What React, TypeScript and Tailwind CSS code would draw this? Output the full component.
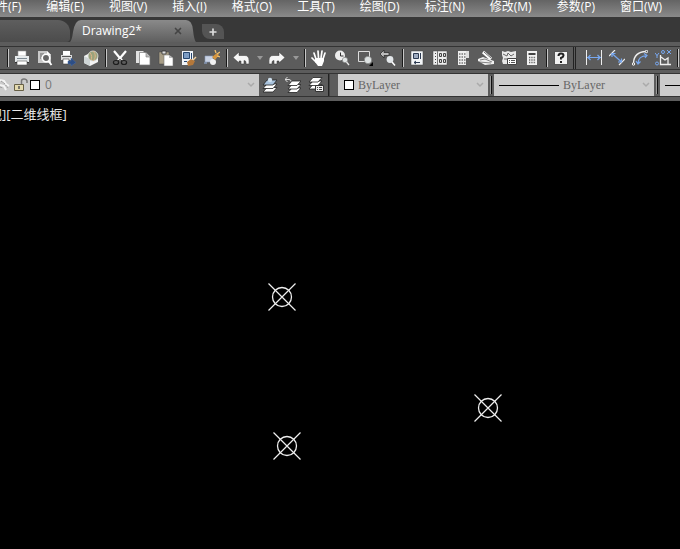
import React from 'react';
import { Plus, X } from 'lucide-react';

const MENUS = [
  '文件(F)', '编辑(E)', '视图(V)', '插入(I)', '格式(O)', '工具(T)',
  '绘图(D)', '标注(N)', '修改(M)', '参数(P)', '窗口(W)',
];

const POINTS = [
  { x: 268, y: 182 },
  { x: 474, y: 293 },
  { x: 273, y: 331 },
];

const icons: Record<string, React.ReactNode> = {
  print: (
    <>
      <path d="M4 1h8v5H4z" fill="#fff" stroke="#999" strokeWidth=".6" />
      <path d="M1 6h14v6H1z" fill="#e6eaec" />
      <path d="M3 8.500h10" stroke="#7e8a92" />
      <path d="M3 11h10v4H3z" fill="#fff" stroke="#555" strokeWidth=".6" />
      <path d="M1 12.500h2M13 12.500h2" stroke="#333" />
    </>
  ),
  preview: (
    <>
      <path d="M1 1h9l4 4v8H1z" fill="#c9c9c9" />
      <path d="M10 1v4h4z" fill="#fff" />
      <path d="M3 4h4M3 6h2M3 8h1" stroke="#666" />
      <circle cx="9" cy="8" r="3.700" fill="#666" stroke="#fff" strokeWidth="1.500" />
      <path d="M11.500 11l3 4" stroke="#fff" strokeWidth="1.800" />
    </>
  ),
  plot: (
    <>
      <path d="M3 1h7v4H3z" fill="#fff" />
      <path d="M1 5h11v5H1z" fill="#dcdcdc" />
      <path d="M2 6.500h9" stroke="#555" />
      <path d="M3 9h6v5H3z" fill="#fff" stroke="#444" strokeWidth=".6" />
      <path d="M8 11h3V8l5 4.500-5 3.500v-2H8z" fill="#2d4e85" stroke="#4a6da5" strokeWidth=".5" />
    </>
  ),
  globe: (
    <>
      <path d="M1 6l6-3 8 3v6l-8 4-6-3z" fill="#f4f4f4" />
      <path d="M1 6l6 3v7l-6-3z" fill="#cfd5d6" />
      <circle cx="10" cy="6" r="5" fill="#9aa37c" stroke="#ddd" strokeWidth=".8" />
      <path d="M10 1c3 3 3 7 0 10M7 3c2 2 2 5 1 7" stroke="#e0b48a" fill="none" />
    </>
  ),
  cut: (
    <>
      <path d="M2 1l8 9.500M14 1l-8 9.500" stroke="#fff" strokeWidth="2.200" />
      <ellipse cx="4" cy="12.500" rx="2.600" ry="2" fill="none" stroke="#1d1d1d" strokeWidth="1.200" />
      <ellipse cx="12" cy="12.500" rx="2.600" ry="2" fill="none" stroke="#1d1d1d" strokeWidth="1.200" />
      <path d="M6 11l2-1.500 2 1.500" stroke="#1d1d1d" fill="none" />
    </>
  ),
  copy: (
    <>
      <path d="M1 1h7l3 3v9H1z" fill="#e2e2e2" />
      <path d="M4.500 2.500H11l4 4V15H4.500z" fill="#fff" stroke="#777" strokeWidth=".7" />
      <path d="M11 3v4h4" fill="#bbb" stroke="#777" strokeWidth=".6" />
    </>
  ),
  paste: (
    <>
      <path d="M1 2h10v12H1z" fill="#a79d86" stroke="#444" strokeWidth=".5" />
      <path d="M4 1h4v3H4z" fill="#ddd" stroke="#333" strokeWidth=".8" />
      <path d="M6 5h5l4 3v8H6z" fill="#fff" stroke="#777" strokeWidth=".6" />
      <path d="M11 5v3h4" fill="#bbb" />
    </>
  ),
  match: (
    <>
      <path d="M1 1h11v14H1z" fill="#f0f4f8" />
      <path d="M2.500 2.500h6v6h-6z" fill="#7c9cc4" stroke="#26466f" />
      <path d="M10.500 3v6M3 11.500h3" stroke="#26466f" />
      <path d="M6 12l4-3 4 2-2 4-5 1z" fill="#b5783a" />
      <path d="M12 10l3-3" stroke="#f0cf9f" strokeWidth="1.500" />
    </>
  ),
  block: (
    <>
      <path d="M1 6h8v6H1z" fill="#c9d2e3" stroke="#8c9bb8" strokeWidth=".6" />
      <path d="M0 13h3" stroke="#9ab4e0" />
      <circle cx="9" cy="12" r="3" fill="#f2f2f2" />
      <path d="M8 7l5-4 2 2-4 5z" fill="#d4943e" />
      <path d="M11 0l1 3M16 2l-3 2M16 7l-3-1" stroke="#f5c16c" strokeWidth="1.300" />
    </>
  ),
  undo: <path d="M0 7.500L6 2v3.500h6q4 0 4 5V14h-3v-1.500q0-2-2-2V14H8v-3H6v2z" fill="#f6f6f6" stroke="#333" strokeWidth=".5" />,
  redo: <path d="M16 7.500L10 2v3.500H4q-4 0-4 5V14h3v-1.500q0-2 2-2V14h3v-3h2v2z" fill="#f6f6f6" stroke="#333" strokeWidth=".5" />,
  hand: (
    <>
      <path d="M5 9L3 3M7.500 8L7 1M10 8l1-7M12 9l2-6M5 12L1 8" stroke="#fff" strokeWidth="1.700" strokeLinecap="round" />
      <path d="M4 8h9v3l-2 5H7l-3-4z" fill="#fff" />
    </>
  ),
  zoom: (
    <>
      <circle cx="6" cy="5.500" r="5" fill="#ededed" />
      <path d="M6.500 2.500v3.500h3" stroke="#333" fill="none" />
      <circle cx="11" cy="10" r="2.700" fill="#e2e6e6" stroke="#666" strokeWidth=".5" />
      <path d="M12.500 12l2.500 3" stroke="#e8e8e8" strokeWidth="1.300" />
    </>
  ),
  zoomWindow: (
    <>
      <path d="M1.500 1.500h11v10h-11z" fill="none" stroke="#ddd" />
      <circle cx="11" cy="10" r="3.700" fill="#dde2e2" stroke="#666" strokeWidth=".5" />
      <path d="M16 12v4h-4z" fill="#000" />
    </>
  ),
  zoomPrev: (
    <>
      <path d="M0 4l4-4v2.500h5v3H4V8z" fill="#bbb" stroke="#222" strokeWidth=".7" />
      <circle cx="10" cy="9.500" r="3.400" fill="#e3e7ea" />
      <path d="M12 12l3 3.500" stroke="#fff" strokeWidth="1.500" />
    </>
  ),
  props: (
    <>
      <path d="M2 1h12v14H2z" fill="#f4f6f8" stroke="#444" strokeWidth=".5" />
      <path d="M4.500 3.500h5v5h-5z" fill="#9eabc0" stroke="#2d3b52" />
      <path d="M11.500 3v6" stroke="#2d3b52" />
      <path d="M5 12.500h6M7 11l-2 1.500L7 14" stroke="#2d3b52" fill="none" />
    </>
  ),
  center: (
    <>
      <path d="M1 1h14v14H1z" fill="#eee" stroke="#444" strokeWidth=".5" />
      <path d="M3.500 3v11" stroke="#444" strokeDasharray="1 2" />
      <path d="M5.500 1v14" stroke="#777" />
      <path d="M7.500 3.500h2v3h-2zM11.500 3.500h2v3h-2zM7.500 9.500h2v3h-2zM11.500 9.500h2v3h-2z" fill="#d9d9d9" stroke="#444" />
    </>
  ),
  palettes: (
    <>
      <path d="M3 1h8v14H3z" fill="#eee" />
      <path d="M11 1h3v7h-3z" fill="#ddd" />
      <path d="M4 4h7M4 7h7M4 10h7M4 13h7" stroke="#777" strokeWidth="1.500" strokeDasharray="1.500 1" />
    </>
  ),
  sheets: (
    <>
      <path d="M0 9l5-2 11 4v3l-9 1-7-4z" fill="#f0f0f0" />
      <path d="M2 10l5-1 7 3M1 12l12 1" stroke="#666" fill="none" strokeWidth=".8" />
      <path d="M5 2l8 7" stroke="#fff" strokeWidth="3" />
      <path d="M6 2l7 6" stroke="#444" strokeWidth=".8" />
    </>
  ),
  markup: (
    <>
      <path d="M1 1l3 1 3-1 3 1 5-1v7H7v6H2l-1-3 1-3-1-3z" fill="#e8e8e8" />
      <path d="M2 4l4 2 1-3 3 3 3-2M3 9h3" stroke="#666" fill="none" />
      <path d="M6.500 8.500h9v6h-9z" fill="#fff" stroke="#444" />
      <path d="M8 10.500h1M10 10.500h4M8 12.500h1M10 12.500h4" stroke="#555" />
    </>
  ),
  calc: (
    <>
      <path d="M3 1h10v14H3z" fill="#f2f2f2" />
      <path d="M4.500 4h7" stroke="#444" strokeWidth="2" />
      <path d="M5 7.500h7M5 10h7M5 12.500h7" stroke="#666" strokeDasharray="1.300 1" strokeWidth="1.300" />
    </>
  ),
  help: (
    <>
      <path d="M1.500 1.500h13v13h-13z" fill="#f2f2f2" stroke="#333" strokeWidth=".7" />
      <path d="M5.500 6q0-2.500 2.500-2.500t2.500 2q0 1.500-2.500 2.500v1.500M8 11v2" fill="none" stroke="#222" strokeWidth="2" />
    </>
  ),
  linear: (
    <>
      <path d="M.5 0v15M15.500 0v15" stroke="#eee" />
      <path d="M1 7.500h14M4.500 5L2 7.500 4.500 10M11.500 5L14 7.500 11.500 10" stroke="#78a8f0" fill="none" strokeWidth="1.200" />
    </>
  ),
  aligned: (
    <>
      <path d="M0 6l6-6M10 15l6-6" stroke="#eee" strokeWidth="1.200" />
      <path d="M3 3.500l9.500 8.500M3 7V3.500h3.500M9 12h3.500V8.500" stroke="#78a8f0" fill="none" strokeWidth="1.200" />
    </>
  ),
  arc: (
    <>
      <path d="M1.500 13Q2 2 14 1.500" fill="none" stroke="#eee" strokeWidth="1.400" />
      <path d="M6 13.500Q6 6 15 5.500M4 11l2 3 2.500-2.500M12 3.500l3 2-2 2.500" fill="none" stroke="#78a8f0" strokeWidth="1.200" />
      <circle cx="1.500" cy="14" r="1.200" fill="#555" stroke="#fff" />
      <circle cx="14.500" cy="1.500" r="1.200" fill="#555" stroke="#fff" />
    </>
  ),
  ordinate: (
    <>
      <path d="M5.500 5v9.500H16M6 7l4 3 3-2v7" fill="none" stroke="#eee" strokeWidth="1.300" />
      <path d="M0 3l2 2.500L4 3M2 5v3M12 0l4 4M16 0l-4 4" fill="none" stroke="#78a8f0" />
      <circle cx="8" cy="2" r="1.500" fill="none" stroke="#78a8f0" />
      <circle cx="2" cy="13.500" r="1.500" fill="none" stroke="#78a8f0" />
    </>
  ),
  layerState: (
    <>
      <path d="M5 10.500h10l-4 4.500H1z" fill="#fff" stroke="#222" strokeWidth=".8" />
      <path d="M5 7h10l-4 4.500H1z" fill="#fff" stroke="#222" strokeWidth=".8" />
      <path d="M5 3h10l-4 5H1z" fill="#a9c3dd" stroke="#222" strokeWidth=".8" />
      <circle cx="8" cy="3" r="2.200" fill="#cfe0ee" />
    </>
  ),
  layerPrev: (
    <>
      <path d="M7 11h9l-4 4.500H3z" fill="#fff" stroke="#222" strokeWidth=".8" />
      <path d="M7 7.500h9L12 12H3z" fill="#fff" stroke="#222" strokeWidth=".8" />
      <path d="M7 4h9l-4 4.500H3z" fill="#fff" stroke="#222" strokeWidth=".8" />
      <path d="M0 2.500h4q2 0 2 2M2.500 0L0 2.500 2.500 5" fill="none" stroke="#ddd" />
    </>
  ),
  layerMgr: (
    <>
      <path d="M5 7.500h9L10 12H1z" fill="#fff" stroke="#222" strokeWidth=".8" />
      <path d="M5 4h9l-4 4.500H1z" fill="#fff" stroke="#222" strokeWidth=".8" />
      <path d="M5 .5h9L10 5H1z" fill="#fff" stroke="#222" strokeWidth=".8" />
      <path d="M7.500 8.500h8v6h-8z" fill="#eee" stroke="#333" />
      <path d="M9 10.500h1M11 10.500h3M9 12.500h1M11 12.500h3" stroke="#444" />
    </>
  ),
};

const ToolButton = ({ name, label }: { name: string; label: string }) => (
  <button type="button" aria-label={label} className="flex h-5 w-[23px] shrink-0 items-center pl-[3px]">
    <svg viewBox="0 0 16 16" className="size-4" aria-hidden="true">{icons[name]}</svg>
  </button>
);

const Separator = () => (
  <div className="flex h-[18px] w-[6px] shrink-0 justify-center self-center">
    <div className="w-px bg-[#181818]" />
    <div className="w-px bg-[#c8c8c8]" />
  </div>
);

const Grip = () => (
  <div className="flex w-[6px] shrink-0 justify-center py-0.5">
    <div className="w-px bg-[#9a9a9a]" />
    <div className="w-px bg-[#101010]" />
  </div>
);

const HistoryArrow = ({ label }: { label: string }) => (
  <button type="button" aria-label={label} className="flex h-5 w-[13px] shrink-0 items-center justify-center">
    <svg viewBox="0 0 6 4" className="h-1 w-1.5" aria-hidden="true"><path d="M0 0h6L3 4z" fill="#999" /></svg>
  </button>
);

const Chevron = () => (
  <svg viewBox="0 0 8 6" className="pointer-events-none absolute top-2 right-1 h-1.5 w-2" aria-hidden="true">
    <path d="M1 1l3 3 3-3" fill="none" stroke="#aaa" strokeWidth="1.500" />
  </svg>
);

const Swatch = () => <span className="size-2.5 shrink-0 border border-black bg-white" />;

export default function App() {
  return (
    <div className="flex min-h-screen flex-col overflow-hidden bg-black font-['Open_Sans','Noto_Sans_CJK_SC',sans-serif]">
      {/* Menu bar */}
      <nav className="flex h-[17px] items-start overflow-hidden bg-linear-to-b from-[#646464] to-[#8a8a8a] text-xs leading-[14px] text-white">
        <div className="-ml-4 flex gap-[25px]">
          {MENUS.map((menu) => (
            <button type="button" key={menu} className="shrink-0 whitespace-nowrap">{menu}</button>
          ))}
        </div>
      </nav>

      {/* Drawing tabs */}
      <div className="flex h-[25px] items-end bg-[#383838]">
        <button type="button" aria-label="Drawing1" className="h-[22px] w-[70px] shrink-0 rounded-tr-xl rounded-br-sm bg-linear-to-b from-[#5e5e5e] to-[#4c4c4c]" />
        <div className="relative flex h-[22px] w-[126px] shrink-0 items-center justify-between pr-[13px] pl-3">
          <svg viewBox="0 0 126 22" preserveAspectRatio="none" className="absolute inset-0 size-full" aria-hidden="true">
            <defs>
              <linearGradient id="tab" x1="0" y1="0" x2="0" y2="1">
                <stop offset="0" stopColor="#8a8a8a" />
                <stop offset="1" stopColor="#5f5f5f" />
              </linearGradient>
            </defs>
            <path d="M0 22Q2 20 3 12Q5 0 11 0H116Q122 0 123 10Q124 20 126 22z" fill="url(#tab)" />
          </svg>
          <button type="button" className="relative text-xs leading-6 text-white">Drawing2*</button>
          <button type="button" aria-label="Close" className="relative"><X className="size-2.5 text-[#444]" strokeWidth={4} /></button>
        </div>
        <button type="button" aria-label="New tab" className="mb-[3px] ml-1.5 flex h-[15px] w-[22px] items-center justify-center rounded-tr-lg rounded-bl-lg bg-[#545454]">
          <Plus className="size-2.5 text-[#ddd]" strokeWidth={4} />
        </button>
      </div>

      {/* Standard toolbar */}
      <div className="bg-[#5c5c5c] pt-1">
        <div className="flex h-6 border-y border-[#333]">
          <div className="flex shrink-0 items-center border-r border-[#222] pl-[5px]">
            <Separator />
            <ToolButton name="print" label="Print" />
            <ToolButton name="preview" label="Print preview" />
            <ToolButton name="plot" label="Publish" />
            <ToolButton name="globe" label="3D print" />
            <Separator />
            <ToolButton name="cut" label="Cut" />
            <ToolButton name="copy" label="Copy" />
            <ToolButton name="paste" label="Paste" />
            <ToolButton name="match" label="Match properties" />
            <ToolButton name="block" label="Block editor" />
            <Separator />
            <ToolButton name="undo" label="Undo" />
            <HistoryArrow label="Undo history" />
            <ToolButton name="redo" label="Redo" />
            <HistoryArrow label="Redo history" />
            <Separator />
            <ToolButton name="hand" label="Pan" />
            <ToolButton name="zoom" label="Zoom realtime" />
            <ToolButton name="zoomWindow" label="Zoom window" />
            <ToolButton name="zoomPrev" label="Zoom previous" />
            <Separator />
            <ToolButton name="props" label="Properties" />
            <ToolButton name="center" label="Design center" />
            <ToolButton name="palettes" label="Tool palettes" />
            <ToolButton name="sheets" label="Sheet set manager" />
            <ToolButton name="markup" label="Markup set manager" />
            <ToolButton name="calc" label="Calculator" />
            <Separator />
            <ToolButton name="help" label="Help" />
          </div>
          <div className="ml-px flex flex-1 items-center overflow-hidden border-l border-[#222] pl-[7px]">
            <ToolButton name="linear" label="Linear dimension" />
            <ToolButton name="aligned" label="Aligned dimension" />
            <ToolButton name="arc" label="Arc length" />
            <ToolButton name="ordinate" label="Ordinate dimension" />
            <Separator />
          </div>
        </div>
      </div>

      {/* Layers and properties */}
      <div className="bg-[#5c5c5c] pt-[3px] pb-1">
        <div className="flex h-6 border-y border-[#333]">
          <div className="relative flex w-[259px] shrink-0 items-center bg-[#cbcbcb]">
            <svg viewBox="0 0 30 16" className="h-4 w-[30px] shrink-0" aria-hidden="true">
              <path d="M0 3l4 1 2 3 3 2M0 8l4 1 2 4" fill="none" stroke="#f4f4f4" strokeWidth="2" />
              <path d="M1 4l3 2 4 5M0 10l3 1" fill="none" stroke="#999" strokeDasharray="2 1" />
              <path d="M14.500 7.500h9v6h-9z" fill="#e3d9ae" stroke="#665f45" />
              <path d="M19 9v3" stroke="#555" strokeWidth="1.500" />
              <path d="M21.500 7V4q0-2 2.500-2t3 2v2" fill="none" stroke="#777" strokeWidth="1.500" />
            </svg>
            <Swatch />
            <select aria-label="Layer" className="h-5 flex-1 appearance-none bg-transparent pl-[5px] text-xs text-[#777]">
              <option>0</option>
            </select>
            <Chevron />
          </div>
          <div className="flex shrink-0 items-center border-r border-[#222]">
            <ToolButton name="layerState" label="Make current" />
            <ToolButton name="layerPrev" label="Layer previous" />
            <ToolButton name="layerMgr" label="Layer states" />
          </div>
          <div className="flex flex-1 overflow-hidden border-l border-[#444] pl-2 font-['Liberation_Serif',serif] text-xs text-[#666]">
            <div className="relative flex w-[150px] shrink-0 items-center bg-[#cbcbcb] pl-1.5">
              <Swatch />
              <select aria-label="Color" className="h-5 flex-1 appearance-none bg-transparent pl-1">
                <option>ByLayer</option>
              </select>
              <Chevron />
            </div>
            <Grip />
            <div className="relative flex w-[160px] shrink-0 items-center bg-[#cbcbcb] pl-[5px]">
              <span className="h-px w-[60px] shrink-0 bg-black" />
              <select aria-label="Linetype" className="h-5 flex-1 appearance-none bg-transparent pl-1">
                <option>ByLayer</option>
              </select>
              <Chevron />
            </div>
            <Grip />
            <div className="flex flex-1 items-center bg-[#cbcbcb] pl-[5px]">
              <span className="h-px flex-1 bg-black" />
            </div>
          </div>
        </div>
      </div>

      {/* Drawing area */}
      <main className="relative flex-1 bg-black">
        <p className="-ml-6 pt-1 text-[13px] leading-[18px] whitespace-nowrap text-[#e8e8e8]">俯视][二维线框]</p>
        {POINTS.map((p) => (
          <svg key={`${p.x}-${p.y}`} viewBox="0 0 28 28" className="absolute size-7" style={{ left: p.x, top: p.y }} aria-hidden="true">
            <path d="M.5.5l27 27M27.500.5l-27 27" stroke="#eee" strokeWidth="1.200" />
            <circle cx="14" cy="14" r="9.500" fill="none" stroke="#eee" strokeWidth="1.300" />
          </svg>
        ))}
      </main>
    </div>
  );
}
